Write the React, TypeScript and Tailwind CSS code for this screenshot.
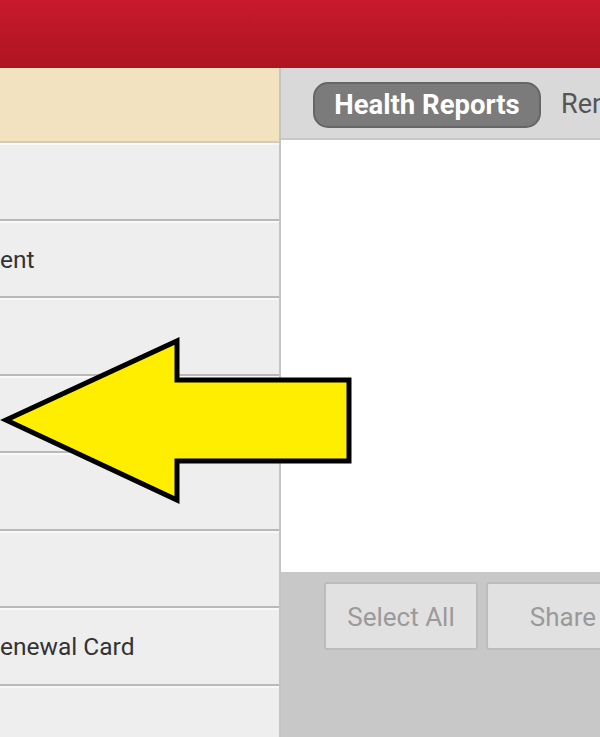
const rows = ['', 'ent', '', '', '', '', 'enewal Card', ''];

export default function App() {
  return (
    <div
      className="relative h-[737px] w-[600px] overflow-hidden bg-white"
      style={{ fontFamily: 'Roboto, "Liberation Sans", sans-serif' }}
    >
      <div className="h-[68px] bg-gradient-to-b from-[#c81a2c] to-[#ae1520]" />
      <div className="flex h-[669px]">
        <div className="flex w-[281px] shrink-0 flex-col border-r-2 border-[#c4c4c4] bg-[#eeeeee]">
          <div className="h-[75px] shrink-0 border-b-2 border-[#d4cbb8] bg-[#f3e2bf]" />
          {rows.map((label, i) => (
            <div
              key={i}
              className="flex h-[77.5px] shrink-0 items-center border-b-2 border-[#b9b9b9] pt-[4px] shadow-[inset_0_2px_0_#f8f8f8] text-[24.5px] text-[#333]"
            >
              {label}
            </div>
          ))}
        </div>
        <div className="flex flex-1 flex-col">
          <div className="flex h-[72px] shrink-0 items-center gap-[20px] border-b-2 border-[#c9c9c9] bg-[#d9d9d9] pl-[32px] pt-[3px] whitespace-nowrap">
            <div className="flex h-[46px] w-[228px] shrink-0 items-center justify-center rounded-[15px] border-2 border-[#666] bg-[#7b7b7b] text-[27.5px] font-bold text-white">
              Health Reports
            </div>
            <span className="text-[27px] text-[#555]">Renewal</span>
          </div>
          <div className="flex-1 bg-white" />
          <div className="flex h-[165px] shrink-0 gap-[8px] bg-[#c8c8c8] pl-[43px] pt-[10px] whitespace-nowrap">
            <div className="flex h-[68px] w-[154px] shrink-0 items-center justify-center rounded-[3px] border-2 border-[#bcbcbc] bg-[#e1e1e1] pt-[2px] text-[26px] text-[#9a9a9a]">
              Select All
            </div>
            <div className="flex h-[68px] w-[154px] shrink-0 items-center justify-center rounded-[3px] border-2 border-[#bcbcbc] bg-[#e1e1e1] pt-[2px] text-[26px] text-[#9a9a9a]">
              Share
            </div>
          </div>
        </div>
      </div>
      <svg className="absolute left-0 top-[336px]" width="356" height="170" viewBox="0 336 356 170">
        <polygon
          points="6,420 177,341 177,380 349,380 349,461 177,461 177,500"
          fill="#ffee00"
          stroke="#000"
          strokeWidth="5"
          strokeLinejoin="miter"
        />
      </svg>
    </div>
  );
}
